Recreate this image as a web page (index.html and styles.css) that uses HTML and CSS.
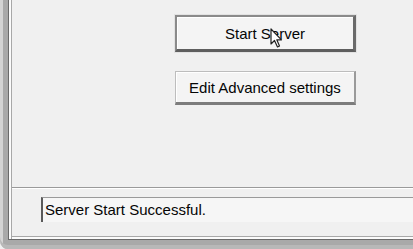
FILE: index.html
```html
<!DOCTYPE html>
<html lang="en">
<head>
  <meta charset="UTF-8" />
  <title>Server Control</title>
  <link rel="stylesheet" href="styles.css">
</head>
<body>

  <div class="frame">
    <div class="client">
      <div class="panel">
        <button class="btn btn-default" type="button">Start Server</button>
        <button class="btn" type="button">Edit Advanced settings</button>
      </div>

      <div class="status-bar">
        <div class="status-box">Server Start Successful.</div>
      </div>
    </div>
  </div>

  <!-- mouse pointer over the start button -->
  <svg class="cursor" width="14" height="21" viewBox="0 0 14 21">
    <path d="M1 1 L1 16 L4.5 12.5 L7.5 19 L9.5 18 L6.8 11.8 L11.5 11.8 Z" fill="#fff" stroke="#222" stroke-width="1.2" stroke-linejoin="round" />
  </svg>

</body>
</html>
```

FILE: styles.css
```css
body {
  margin: 0;
  font-family: "Liberation Sans", Arial, sans-serif;
  background: #f0f0f0;
  overflow: hidden;
}

.frame {
  width: 413px;
  height: 249px;
  box-sizing: border-box;
  padding: 0 0 9px 8px;
  background: linear-gradient(to right, #d4d4d4 0, #d4d4d4 3px, #a9a9a9 3px);
  border-bottom-left-radius: 8px;
  box-shadow: inset 0 -4px 0 #b8b8b8;
}

.client {
  height: 100%;
  box-sizing: border-box;
  border-left: 1px solid #6a6a6a;
  border-bottom: 1px solid #6a6a6a;
  background: #f0f0f0;
  box-shadow: inset 2px 0 0 #fbfbfb, inset 3px 0 0 #a8a8a8, inset 0 -2px 0 #fbfbfb, inset 0 -3px 0 #a8a8a8;
  display: flex;
  flex-direction: column;
}

.panel {
  height: 188px;
  box-sizing: border-box;
  padding: 15px 0 0 163px;
  display: flex;
  flex-direction: column;
  gap: 19px;
  border-bottom: 1px solid #9a9a9a;
  box-shadow: 0 1px 0 #ffffff;
  margin-left: 3px;
}

.btn {
  width: 181px;
  height: 34px;
  font-family: "Liberation Sans", Arial, sans-serif;
  font-size: 15px;
  color: #050505;
  background: #f4f4f4;
  border: 1px solid #bdbdbd;
  border-bottom: 3px solid #7c7c7c;
  border-right: 2px solid #9a9a9a;
  box-shadow: inset 1px 1px 0 #ffffff;
  padding: 0;
  cursor: pointer;
}

.btn-default {
  height: 37px;
  border: 2px solid #8a8a8a;
  border-bottom: 3px solid #5e5e5e;
  border-right: 3px solid #6a6a6a;
  box-shadow: 0 0 0 1px #e2e2e2, inset 1px 1px 0 #ffffff;
}

.status-bar {
  flex: 1;
  padding: 9px 0 0 32px;
}

.status-box {
  height: 25px;
  box-sizing: border-box;
  border-left: 2px solid #5a5a5a;
  border-top: 1px solid #9a9a9a;
  background: #f6f6f6;
  padding: 3px 0 0 2px;
  font-size: 15px;
  color: #050505;
  white-space: nowrap;
}

.cursor {
  position: absolute;
  left: 270px;
  top: 28px;
}
```
